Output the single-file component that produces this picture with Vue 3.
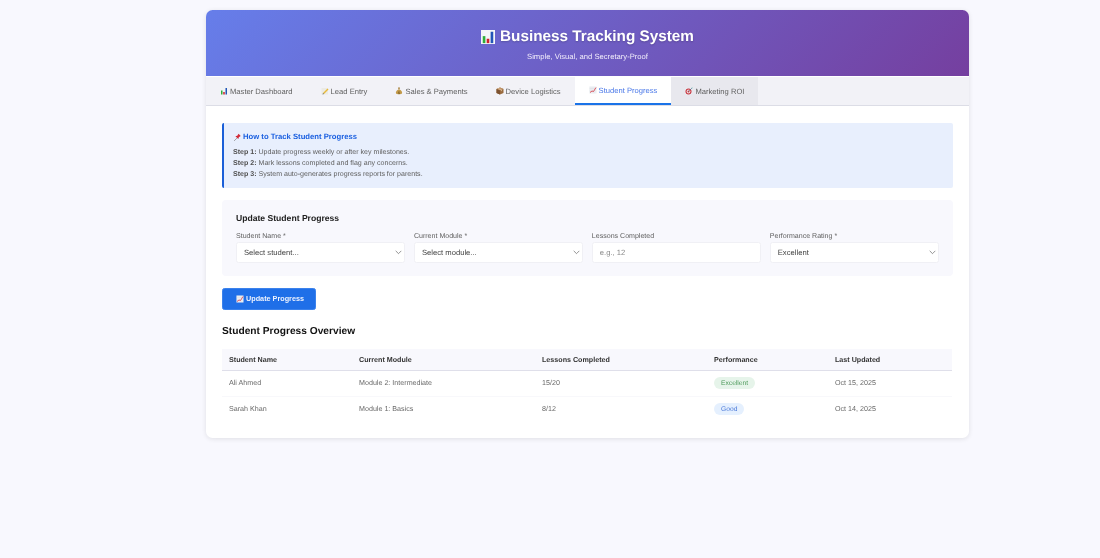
<script setup>
const tabs = [
  { id: 'chart', label: 'Master Dashboard' },
  { id: 'memo', label: 'Lead Entry' },
  { id: 'money', label: 'Sales & Payments' },
  { id: 'box', label: 'Device Logistics' },
  { id: 'trend', label: 'Student Progress', active: true },
  { id: 'target', label: 'Marketing ROI', hover: true },
]
const fields = [
  { label: 'Student Name *', value: 'Select student...', type: 'select' },
  { label: 'Current Module *', value: 'Select module...', type: 'select' },
  { label: 'Lessons Completed', value: 'e.g., 12', type: 'input' },
  { label: 'Performance Rating *', value: 'Excellent', type: 'select' },
]
const steps = [
  ['Step 1:', 'Update progress weekly or after key milestones.'],
  ['Step 2:', 'Mark lessons completed and flag any concerns.'],
  ['Step 3:', 'System auto-generates progress reports for parents.'],
]
const rows = [
  { name: 'Ali Ahmed', module: 'Module 2: Intermediate', lessons: '15/20', perf: 'Excellent', cls: 'green', date: 'Oct 15, 2025' },
  { name: 'Sarah Khan', module: 'Module 1: Basics', lessons: '8/12', perf: 'Good', cls: 'blue', date: 'Oct 14, 2025' },
]
</script>

<template>
  <div class="page">
    <div class="card">
      <header class="hero">
        <h1 class="title">
          <svg class="ico-title" viewBox="0 0 16 16"><rect x="0" y="0" width="16" height="16" fill="#f4f6f8"/><rect x="2" y="7" width="3" height="8" fill="#2fae3a"/><rect x="6.5" y="10" width="3" height="5" fill="#d0202a"/><rect x="11" y="2" width="3" height="13" fill="#2255b8"/></svg>
          <span>Business Tracking System</span>
        </h1>
        <p class="subtitle">Simple, Visual, and Secretary-Proof</p>
      </header>

      <nav class="tabs">
        <div v-for="t in tabs" :key="t.label" class="tab" :class="{ active: t.active, hover: t.hover }">
          <svg class="ico" viewBox="0 0 16 16">
            <template v-if="t.id === 'chart'"><rect width="16" height="16" fill="#f1f3f5"/><rect x="2" y="7" width="3" height="8" fill="#2fae3a"/><rect x="6.5" y="10" width="3" height="5" fill="#d0202a"/><rect x="11" y="2" width="3" height="13" fill="#2255b8"/></template>
            <template v-else-if="t.id === 'memo'"><rect x="1" y="2" width="13" height="13" fill="#ecebe4"/><path d="M4 12 L13 3 L15 5 L6 14 Z" fill="#e8b93a"/><path d="M4 12 L6 14 L3 15 Z" fill="#555"/></template>
            <template v-else-if="t.id === 'money'"><path d="M6 1 H10 L9 5 H7 Z" fill="#a8813a"/><path d="M7 5 H9 C13 7 15 10 14 13 C13 15 3 15 2 13 C1 10 3 7 7 5 Z" fill="#c29a4a"/><text x="8" y="13" font-size="7" text-anchor="middle" fill="#5d4310" font-family="Liberation Sans, sans-serif">$</text></template>
            <template v-else-if="t.id === 'box'"><path d="M8 1 L15 4 V12 L8 15 L1 12 V4 Z" fill="#9a6b3f"/><path d="M8 1 L15 4 L8 7 L1 4 Z" fill="#c29468"/><path d="M8 7 V15 L1 12 V4 Z" fill="#7c5230"/><path d="M4.5 2.5 L11.5 5.5 V8 L10 8.6 V6.2 L3 3.2 Z" fill="#e2c9a8"/></template>
            <template v-else-if="t.id === 'trend'"><rect x="1" y="1" width="14" height="14" fill="#eef0f3"/><path d="M2 1 V15 M6 1 V15 M10 1 V15 M1 5 H15 M1 10 H15" stroke="#cfd4dc" stroke-width=".5"/><path d="M2 13 L6 10 L9 11 L14 3" fill="none" stroke="#d8333f" stroke-width="1.6"/></template>
            <template v-else><circle cx="7" cy="9" r="6" fill="#c8353f"/><circle cx="7" cy="9" r="3.8" fill="#efe6e6"/><circle cx="7" cy="9" r="2" fill="#c8353f"/><path d="M7 9 L14 2" stroke="#3e6d8a" stroke-width="1.2"/><path d="M13 1 L15 1 L15 3 Z" fill="#4fb3a8"/></template>
          </svg>
          <span>{{ t.label }}</span>
        </div>
      </nav>

      <main class="content">
        <section class="help">
          <h3 class="help-title">
            <svg class="pin" viewBox="0 0 16 16"><path d="M2 15 L8 9" stroke="#777" stroke-width="1.2"/><path d="M4.5 6 L10 11.5 L11 8 L14.5 5.5 L10.5 1.5 L8 5 Z" fill="#d22b38"/></svg>
            <span>How to Track Student Progress</span>
          </h3>
          <p v-for="s in steps" :key="s[0]" class="step"><strong>{{ s[0] }}</strong> {{ s[1] }}</p>
        </section>

        <section class="form">
          <h3 class="form-title">Update Student Progress</h3>
          <div class="grid">
            <div v-for="f in fields" :key="f.label" class="field">
              <label class="label">{{ f.label }}</label>
              <div class="control" :class="{ placeholder: f.type === 'input' }">
                <span>{{ f.value }}</span>
                <svg v-if="f.type === 'select'" class="chev" viewBox="0 0 10 6"><path d="M1 1 L5 5 L9 1" fill="none" stroke="#666" stroke-width="1"/></svg>
              </div>
            </div>
          </div>
        </section>

        <button class="btn">
          <svg class="ico" viewBox="0 0 16 16"><rect x="1" y="1" width="14" height="14" fill="#eef0f3"/><path d="M2 1 V15 M6 1 V15 M10 1 V15 M1 5 H15 M1 10 H15" stroke="#cfd4dc" stroke-width=".5"/><path d="M2 13 L6 10 L9 11 L14 3" fill="none" stroke="#d8333f" stroke-width="1.6"/></svg>
          <span>Update Progress</span>
        </button>

        <h3 class="overview">Student Progress Overview</h3>

        <table class="table">
          <thead>
            <tr>
              <th class="c1">Student Name</th>
              <th class="c2">Current Module</th>
              <th class="c3">Lessons Completed</th>
              <th class="c4">Performance</th>
              <th class="c5">Last Updated</th>
            </tr>
          </thead>
          <tbody>
            <tr v-for="r in rows" :key="r.name">
              <td>{{ r.name }}</td>
              <td>{{ r.module }}</td>
              <td>{{ r.lessons }}</td>
              <td><span class="badge" :class="r.cls">{{ r.perf }}</span></td>
              <td>{{ r.date }}</td>
            </tr>
          </tbody>
        </table>
      </main>
    </div>
  </div>
</template>

<style>
html, body { margin: 0; background: #f8f8fe; }
</style>

<style scoped>
.page {
  min-height: 558px;
  box-sizing: border-box;
  padding: 10px 131px 0 206px;
  background: #f8f8fe;
  font-family: "Liberation Sans", Arial, sans-serif;
  text-rendering: geometricPrecision;
  color: #333;
}
.card {
  width: 763px;
  height: 428px;
  background: #fff;
  border-radius: 6.5px;
  box-shadow: 0 1px 5px rgba(0, 0, 0, 0.1);
  overflow: hidden;
  filter: blur(0.3px);
}
.hero {
  height: 66px;
  box-sizing: border-box;
  padding-top: 17px;
  text-align: center;
  color: #fff;
  background: linear-gradient(135deg, #667eea 0%, #753f9f 100%);
}
.title {
  margin: 0;
  font-size: 15.3px;
  line-height: 20px;
  font-weight: 700;
  display: flex;
  justify-content: center;
  align-items: center;
  gap: 5px;
  text-shadow: 0 1px 2px rgba(0, 0, 0, 0.2);
}
.ico-title { width: 14px; height: 14px; }
.subtitle { margin: 4px 0 0; font-size: 7.65px; line-height: 11px; color: #f1ecfb; }
.tabs {
  display: flex;
  height: 28px;
  background: #f2f2f7;
  border-bottom: 1px solid #dcdde6;
  margin-top: 1px;
}
.tab {
  display: flex;
  align-items: center;
  gap: 2px;
  padding: 0 14px;
  font-size: 7.62px;
  color: #5f5f5f;
  white-space: nowrap;
}
.tab.active { background: #fff; color: #4a78e8; border-bottom: 2px solid #1a73e8; }
.tab.hover { background: #e8e8ee; }
.ico { width: 8px; height: 8px; flex: none; }
.pin { width: 8.5px; height: 8.5px; flex: none; }
.content { padding: 17px 16px 20px; }
.help {
  height: 65px;
  box-sizing: border-box;
  padding: 9px 9px;
  background: #e8effd;
  border-left: 2px solid #1a5fd8;
  border-radius: 2px;
}
.help-title {
  margin: 0 0 5px;
  font-size: 7.7px;
  line-height: 10px;
  font-weight: 700;
  color: #1a5fe0;
  display: flex;
  align-items: center;
  gap: 1.5px;
}
.step { margin: 0; font-size: 7.07px; line-height: 11.2px; color: #606060; }
.step strong { color: #505050; }
.form {
  margin-top: 12px;
  height: 76px;
  box-sizing: border-box;
  padding: 12px 14px;
  background: #f8f8fd;
  border-radius: 4px;
}
.form-title { margin: 0 0 8px; font-size: 8.6px; line-height: 12px; font-weight: 700; color: #222; }
.grid { display: grid; grid-template-columns: repeat(4, 1fr); column-gap: 8.7px; }
.label { display: block; font-size: 7.05px; line-height: 10px; color: #606060; }
.control {
  height: 21px;
  box-sizing: border-box;
  padding: 0 2.5px 0 7px;
  display: flex;
  align-items: center;
  justify-content: space-between;
  background: #fff;
  border: 1px solid #f0f0f5;
  border-radius: 2.5px;
  font-size: 7.65px;
  color: #444;
}
.control.placeholder { color: #8a8a8a; }
.chev { width: 7px; height: 4.5px; }
.btn {
  margin-top: 12px;
  display: flex;
  align-items: center;
  gap: 2px;
  width: 94px;
  height: 21.5px;
  padding: 0 0 0 13px;
  background: #1f6fe8;
  border: 1px solid #3b82ec;
  border-radius: 2.5px;
  color: #eef3fe;
  font-family: inherit;
  font-size: 7.25px;
  font-weight: 700;
}
.overview { margin: 15.5px 0 11px; font-size: 10.2px; line-height: 13px; font-weight: 700; color: #111; }
.table { width: 730px; border-collapse: collapse; table-layout: fixed; font-size: 7.15px; }
.table th {
  box-sizing: border-box;
  height: 21.5px;
  padding: 0 7px;
  text-align: left;
  font-weight: 700;
  color: #333;
  background: #f8f8fd;
  border-bottom: 1px solid #dfdfea;
}
.table td { box-sizing: border-box; height: 25.5px; padding: 0 7px; color: #6a6a6a; border-bottom: 1px solid #f8f8fb; }
.table tr:last-child td { border-bottom: 0; }
.c1 { width: 130px; }
.c2 { width: 183px; }
.c3 { width: 172px; }
.c4 { width: 121px; }
.badge { display: inline-block; vertical-align: middle; padding: 0 7px; height: 12px; line-height: 13.5px; border-radius: 6px; font-size: 6.7px; }
.green { background: #e6f4ea; color: #4e9a5c; }
.blue { background: #e5f0fe; color: #4a78d8; }
</style>
